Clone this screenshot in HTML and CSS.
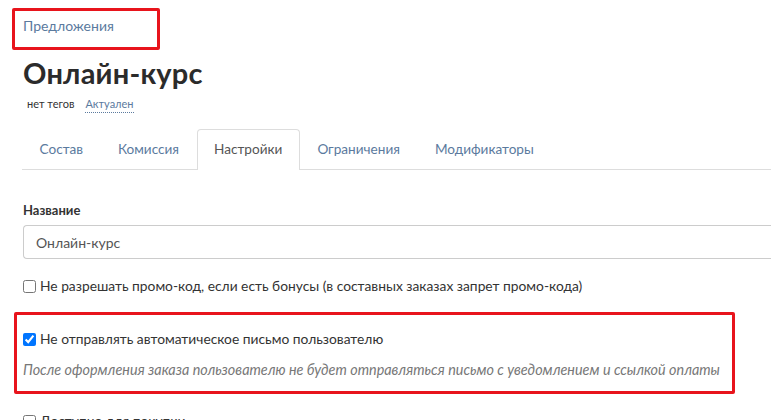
FILE: index.html
```html
<!DOCTYPE html>
<html lang="ru">
<head>
<meta charset="utf-8">
<link rel="stylesheet" href="styles.css">
</head>
<body>
<div class="page">
  <div class="crumb-box"><a class="crumb" href="#">Предложения</a></div>
  <h1 class="title">Онлайн-курс</h1>
  <div class="meta"><span class="tags">нет тегов</span><a class="status" href="#">Актуален</a></div>
  <nav class="tabs">
    <a class="tab" href="#">Состав</a>
    <a class="tab" href="#">Комиссия</a>
    <a class="tab active" href="#">Настройки</a>
    <a class="tab" href="#">Ограничения</a>
    <a class="tab" href="#">Модификаторы</a>
  </nav>
  <div class="form">
    <label class="label">Название</label>
    <div class="input">Онлайн-курс</div>
    <label class="check"><input type="checkbox"> Не разрешать промо-код, если есть бонусы (в составных заказах запрет промо-кода)</label>
    <div class="highlight">
      <label class="check"><input type="checkbox" checked> Не отправлять автоматическое письмо пользователю</label>
      <p class="hint">После оформления заказа пользователю не будет отправляться письмо с уведомлением и ссылкой оплаты</p>
    </div>
    <label class="check"><input type="checkbox"> Доступно для покупки</label>
  </div>
</div>
</body>
</html>
```
FILE: styles.css
```css
* { box-sizing: border-box; }
html, body { margin: 0; padding: 0; background: #fff; overflow: hidden; }
body { font-family: Lato, "Open Sans", Arial, sans-serif; color: #333; }
.page { padding: 8px 0 0 12px; width: 771px; }
.crumb-box { width: 148px; height: 42px; border: 3px solid #e8141c; border-radius: 2px; padding: 4px 0 0 8px; }
.crumb { color: #5b7a9e; font-size: 14px; text-decoration: none; }
.title { margin: 6px 0 0 11px; font-size: 29px; font-weight: 700; color: #2b2b2b; line-height: 34px; letter-spacing: 0.2px; }
.meta { margin: 6px 0 0 15px; font-size: 11px; display: flex; gap: 11px; line-height: 16px; }
.tags { color: #333; }
.status { color: #5b7a9e; text-decoration: none; border-bottom: 1px dotted #5b7a9e; }
.tabs { margin: 16px 0 0 10px; display: flex; border-bottom: 1px solid #ddd; height: 41px; }
.tab { padding: 11px 16.5px 0; font-size: 13.6px; color: #5b7a9e; text-decoration: none; border: 1px solid transparent; border-bottom: none; border-radius: 4px 4px 0 0; margin-bottom: -1px; }
.tab.active { color: #555; border-color: #ddd; background: #fff; height: 41px; }
.form { margin: 32px 0 0 11px; }
.label { display: block; font-weight: 700; font-size: 13px; line-height: 16px; color: #333; }
.input { margin-top: 7px; height: 34px; border: 1px solid #ccc; border-right: none; border-radius: 4px 0 0 4px; padding: 8px 12px; font-size: 14px; color: #555; width: 760px; }
.check { display: flex; align-items: center; font-size: 13.8px; color: #333; line-height: 18px; margin-top: 18px; gap: 4px; }
.check input { margin: 0; width: 13px; height: 13px; }
.highlight { margin: 17px 0 0 -9px; width: 721px; height: 82px; border: 3px solid #e8141c; border-radius: 2px; padding: 0 0 0 6px; }
.highlight .check { margin-top: 15px; }
.hint { margin: 13px 0 0; font-style: italic; font-size: 14.4px; color: #777; line-height: 18px; }
```
